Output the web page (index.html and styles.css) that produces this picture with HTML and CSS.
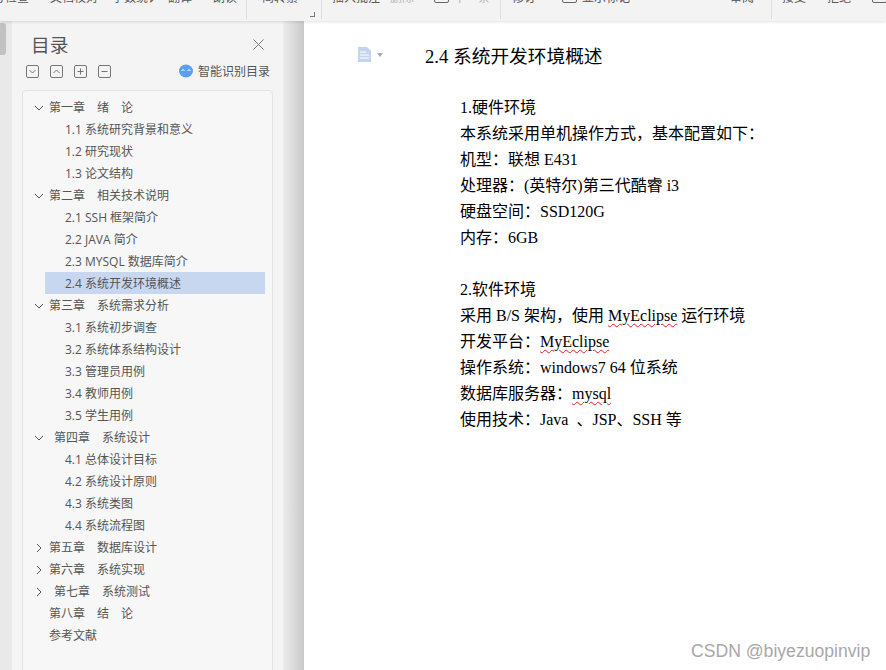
FILE: index.html
```html
<!DOCTYPE html>
<html lang="zh-CN">
<head>
  <meta charset="UTF-8" />
  <title>2.4 系统开发环境概述</title>
  <link rel="stylesheet" href="styles.css">
</head>
<body>
  <svg class="defs" width="0" height="0">
    <symbol id="down" viewBox="0 0 10 10"><path d="M1 3l4 4 4-4" fill="none" stroke="#555" stroke-width="1"/></symbol>
    <symbol id="right" viewBox="0 0 10 10"><path d="M3 1l4 4-4 4" fill="none" stroke="#555" stroke-width="1"/></symbol>
  </svg>

  <div class="toolbar">
    <div class="tb-group g1">
      <span>拼写检查</span>
      <span class="m21">文档校对</span>
      <span class="m14 narrow">字数统计</span>
      <span class="m13">翻译</span>
      <span class="m21">朗读</span>
    </div>
    <div class="tb-group g2">
      <svg class="tb-swap" width="6" height="10" viewBox="0 0 6 10"><path d="M1 0v4l2 2" fill="none" stroke="#4a86d8" stroke-width="1.2"/></svg>
      <span>简转繁</span>
      <i class="corner"></i>
    </div>
    <div class="tb-group g3">
      <span>插入批注</span>
      <span class="m10 off">删除</span>
      <i class="tb-box m20"></i>
      <span class="m5 off">下一条</span>
    </div>
    <div class="tb-group g4">
      <span>修订</span>
      <i class="tb-box m26"></i>
      <span class="m5">显示标记</span>
      <span class="m100">审阅</span>
    </div>
    <div class="tb-group g5">
      <span>接受</span>
      <span class="m21">拒绝</span>
      <i class="tb-box m21"></i>
    </div>
  </div>

  <div class="main">
    <div class="strip"><div class="thumb"></div></div>

    <aside class="panel">
      <div class="panel-head">
        <h2>目录</h2>
        <svg class="close" width="11" height="11" viewBox="0 0 11 11"><path d="M.5.5l10 10M10.5.5l-10 10" stroke="#777" fill="none"/></svg>
      </div>
      <div class="panel-tools">
        <svg class="tool" viewBox="0 0 13 13"><rect x=".5" y=".5" width="12" height="12" rx="1.5"/><path d="M3.5 5l3 3 3-3"/></svg>
        <svg class="tool" viewBox="0 0 13 13"><rect x=".5" y=".5" width="12" height="12" rx="1.5"/><path d="M3.5 8l3-3 3 3"/></svg>
        <svg class="tool" viewBox="0 0 13 13"><rect x=".5" y=".5" width="12" height="12" rx="1.5"/><path d="M3.5 6.5h6M6.5 3.5v6"/></svg>
        <svg class="tool" viewBox="0 0 13 13"><rect x=".5" y=".5" width="12" height="12" rx="1.5"/><path d="M3.5 6.5h6"/></svg>
        <div class="smart">
          <svg width="14" height="14" viewBox="0 0 14 14"><ellipse cx="7" cy="7" rx="7" ry="6.5" fill="#5a9ff0"/><path d="M2.5 6.5q1.5-1.5 3 0M8.5 6.5q1.5-1.5 3 0" stroke="#fff" fill="none"/></svg>
          <span>智能识别目录</span>
        </div>
      </div>

      <div class="toc">
        <div class="ch"><svg class="chev"><use href="#down"/></svg><span>第一章　绪　论</span></div>
        <div class="sec">1.1 系统研究背景和意义</div>
        <div class="sec">1.2 研究现状</div>
        <div class="sec">1.3 论文结构</div>
        <div class="ch"><svg class="chev"><use href="#down"/></svg><span>第二章　相关技术说明</span></div>
        <div class="sec">2.1 SSH 框架简介</div>
        <div class="sec">2.2 JAVA 简介</div>
        <div class="sec">2.3 MYSQL 数据库简介</div>
        <div class="sec active">2.4 系统开发环境概述</div>
        <div class="ch"><svg class="chev"><use href="#down"/></svg><span>第三章　系统需求分析</span></div>
        <div class="sec">3.1 系统初步调查</div>
        <div class="sec">3.2 系统体系结构设计</div>
        <div class="sec">3.3 管理员用例</div>
        <div class="sec">3.4 教师用例</div>
        <div class="sec">3.5 学生用例</div>
        <div class="ch"><svg class="chev"><use href="#down"/></svg><span class="lead">第四章　系统设计</span></div>
        <div class="sec">4.1 总体设计目标</div>
        <div class="sec">4.2 系统设计原则</div>
        <div class="sec">4.3 系统类图</div>
        <div class="sec">4.4 系统流程图</div>
        <div class="ch"><svg class="chev"><use href="#right"/></svg><span>第五章　数据库设计</span></div>
        <div class="ch"><svg class="chev"><use href="#right"/></svg><span>第六章　系统实现</span></div>
        <div class="ch"><svg class="chev"><use href="#right"/></svg><span class="lead">第七章　系统测试</span></div>
        <div class="ch"><i class="chev"></i><span>第八章　结　论</span></div>
        <div class="ch"><i class="chev"></i><span>参考文献</span></div>
      </div>
    </aside>

    <div class="gutter"></div>

    <main class="doc">
      <div class="doc-head">
        <svg class="doc-icon" width="13" height="15" viewBox="0 0 13 15"><path d="M0 0h9l4 4v11H0z" fill="#c3d4ec"/><path d="M2 5h6M2 8h9M2 11h9" stroke="#fff" fill="none"/></svg>
        <i class="caret"></i>
        <h1>2.4 系统开发环境概述</h1>
      </div>
      <div class="doc-body">
        <p>1.硬件环境</p>
        <p>本系统采用单机操作方式，基本配置如下：</p>
        <p>机型：联想 E431</p>
        <p>处理器：(英特尔)第三代酷睿 i3</p>
        <p>硬盘空间：SSD120G</p>
        <p>内存：6GB</p>
        <p class="blank">&nbsp;</p>
        <p>2.软件环境</p>
        <p>采用 B/S 架构，使用 <span class="typo">MyEclipse</span> 运行环境</p>
        <p>开发平台：<span class="typo">MyEclipse</span></p>
        <p>操作系统：windows7 64 位系统</p>
        <p>数据库服务器：<span class="typo">mysql</span></p>
        <p>使用技术：Java&nbsp; 、JSP、SSH 等</p>
      </div>
    </main>
  </div>

  <div class="watermark">CSDN @biyezuopinvip</div>
</body>
</html>
```

FILE: styles.css
```css
html, body {
  margin: 0;
  height: 670px;
  overflow: hidden;
  background: #fff;
}
body {
  font-family: "Open Sans", "Noto Sans CJK SC", sans-serif;
  color: #555;
  font-size: 12px;
}
.defs {
  display: block;
}

/* toolbar, only its bottom edge shows */
.toolbar {
  display: flex;
  position: relative;
  z-index: 2;
  height: 21px;
  overflow: hidden;
  background: #f3f3f3;
  box-shadow: 0 1px 3px rgba(0,0,0,0.12);
}
.tb-group {
  display: flex;
  flex: none;
  box-sizing: border-box;
  height: 19px;
  position: relative;
  border-right: 1px solid #dedede;
  line-height: 14px;
  color: #555;
}
.tb-group > span {
  flex: none;
  margin-top: -9px;
  height: 14px;
}
.g1 { width: 248px; margin-left: -1px; }
.g1 > span:first-child { margin-left: -18px; }
.g2 { width: 75px; padding-left: 9px; }
.g3 { width: 179px; padding-left: 10px; }
.g4 { width: 271px; padding-left: 11px; }
.g5 { flex: 1; padding-left: 10px; border-right: 0; }
.m5 { margin-left: 5px; }
.m10 { margin-left: 10px; }
.m13 { margin-left: 13px; }
.m14 { margin-left: 14px; }
.m20 { margin-left: 20px; }
.m21 { margin-left: 21px; }
.m26 { margin-left: 26px; }
.m100 { margin-left: 100px; }
.narrow { width: 43px; white-space: nowrap; overflow: hidden; }
.off { color: #b5b5b5; }
.tb-swap {
  flex: none;
  margin-top: -6px;
}
.tb-box {
  flex: none;
  box-sizing: border-box;
  width: 15px;
  height: 10px;
  margin-top: -7px;
  border: 1px solid #666;
  border-radius: 2px;
}
.corner {
  position: absolute;
  right: 6px;
  top: 12px;
  width: 4px;
  height: 4px;
  border-right: 1px solid #777;
  border-bottom: 1px solid #777;
}

.main {
  display: flex;
  height: 649px;
}
.strip {
  flex: none;
  width: 12px;
  background: #e9e9e9;
}
.thumb {
  width: 6px;
  height: 32px;
  margin-top: 2px;
  background: #c2c2c2;
  border-radius: 0 3px 3px 0;
}

/* contents panel */
.panel {
  flex: none;
  width: 271px;
  box-sizing: border-box;
  padding: 0 10px;
  background: #f4f4f4;
}
.panel-head {
  display: flex;
  justify-content: space-between;
  align-items: center;
  height: 43px;
  padding: 0 9px 0 9px;
}
.panel-head h2 {
  margin: 2px 0 0;
  font-size: 18.7px;
  font-weight: 400;
  color: #555;
}
.close {
  margin-top: 3px;
}
.panel-tools {
  display: flex;
  align-items: center;
  gap: 11px;
  height: 14px;
  padding-left: 4px;
  padding-right: 3px;
}
.tool {
  flex: none;
  width: 13px;
  height: 13px;
  fill: none;
  stroke: #777;
}
.smart {
  display: flex;
  align-items: center;
  gap: 5px;
  margin-left: auto;
  white-space: nowrap;
}
.toc {
  box-sizing: border-box;
  height: 600px;
  margin-top: 12px;
  padding: 5px 0;
  background: #f7f7f7;
  border: 1px solid #e3e3e3;
  border-radius: 4px;
}
.ch, .sec {
  box-sizing: border-box;
  height: 22px;
  line-height: 24px;
  white-space: pre;
}
.ch {
  display: flex;
  align-items: center;
  padding-top: 2px;
  line-height: 20px;
}
.chev {
  flex: none;
  width: 10px;
  height: 10px;
  margin: 0 5px 0 11px;
}
.lead {
  margin-left: 5px;
}
.sec {
  margin: 0 7px 0 22px;
  padding-left: 20px;
}
.active {
  background: #c7d7f0;
}

.gutter {
  flex: none;
  width: 21px;
  background: linear-gradient(90deg, #ececec, #c9c9c9);
}

/* document page */
.doc {
  flex: 1;
  font-family: "Liberation Serif", "Noto Sans CJK SC", serif;
  color: #000;
  padding-top: 19px;
}
.doc-head {
  display: flex;
  align-items: center;
  height: 28px;
  padding-left: 54px;
}
.doc-icon {
  flex: none;
}
.caret {
  flex: none;
  margin: 1px 0 0 6px;
  border: 3px solid transparent;
  border-top: 4px solid #aaa;
  border-bottom: 0;
}
.doc-head h1 {
  margin: 0 0 0 42px;
  font-size: 18.7px;
  font-weight: 400;
  white-space: nowrap;
}
.doc-body {
  margin-top: 27px;
  padding-left: 156px;
  font-size: 16px;
  line-height: 26px;
}
.doc-body p {
  margin: 0;
  height: 26px;
  white-space: nowrap;
}
.typo {
  text-decoration: underline wavy #e02020 1px;
  text-underline-offset: 2px;
}

.watermark {
  position: absolute;
  left: 691px;
  top: 641px;
  font-family: "Liberation Sans", sans-serif;
  font-size: 17.6px;
  line-height: 20px;
  color: #a8a8a8;
  white-space: nowrap;
}
```
